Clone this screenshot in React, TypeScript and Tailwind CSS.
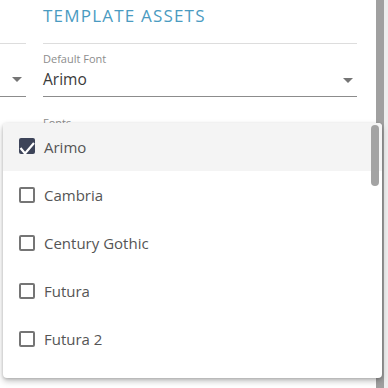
import { useState } from "react";

const fonts = ["Arimo", "Cambria", "Century Gothic", "Futura", "Futura 2"];

function Caret({ className }: { className?: string }) {
  return (
    <svg width="10" height="5" viewBox="0 0 10 5" className={className}>
      <path d="M0 0 L10 0 L5 5 Z" fill="#757575" />
    </svg>
  );
}

function Checkbox({ checked }: { checked: boolean }) {
  if (checked) {
    return (
      <svg width="16" height="18" viewBox="0 0 16 18" className="shrink-0">
        <rect x="0" y="0" width="16" height="16" rx="2" fill="#3d4459" />
        <path d="M1.5 10 L6 15.5 L15 5" fill="none" stroke="#ffffff" strokeWidth="2.2" />
      </svg>
    );
  }
  return <span className="w-4 h-4 shrink-0 rounded-[2px] border-2 border-[#757575]" />;
}

export default function App() {
  const [selected] = useState<string[]>(["Arimo"]);

  return (
    <div className="relative w-[388px] h-[388px] overflow-hidden bg-white flex" style={{ fontFamily: "'Open Sans', 'Noto Sans', sans-serif" }}>
      <div className="flex-1 flex gap-[17px]">
        {/* cut-off left column */}
        <div className="w-[26px] shrink-0 pt-[43px]">
          <div className="border-t border-[#dddddd]" />
          <div className="h-[53px] flex items-end justify-end pb-[14px] pr-[4px] border-b border-[#8c8c8c]">
            <Caret />
          </div>
        </div>

        {/* template assets column */}
        <div className="w-[314px] shrink-0">
          <h2 className="h-[43px] pt-[4px] text-[17px] leading-[24px] tracking-[1.2px] text-[#4a9bc1]">TEMPLATE ASSETS</h2>
          <div className="border-t border-[#dddddd]" />
          <div className="pt-[8px]">
            <div className="text-[11px] leading-[14px] text-[#8d8d8d]">Default Font</div>
            <div className="h-[31px] flex items-center justify-between border-b border-[#8c8c8c] pb-[2px]">
              <span className="text-[15.5px] text-[#3a3a3a]">Arimo</span>
              <Caret className="mr-[4px]" />
            </div>
          </div>
          <div className="pt-[19px] text-[11px] leading-[14px] text-[#8d8d8d]">Fonts</div>
        </div>
      </div>

      {/* page scrollbar */}
      <div className="w-[12px] shrink-0 flex">
        <div className="w-[8px] bg-[#a0a0a0]" />
        <div className="w-[4px] bg-[#eeeeee]" />
      </div>

      {/* dropdown menu */}
      <div className="absolute left-[3px] top-[123px] w-[379px] h-[255px] bg-white rounded-[4px] shadow-[0_3px_6px_rgba(0,0,0,0.25),0_1px_3px_rgba(0,0,0,0.15)] overflow-hidden">
        <ul>
          {fonts.map((f) => {
            const on = selected.includes(f);
            return (
              <li key={f} className={`h-[48px] flex items-center gap-[9px] pl-[16px] ${on ? "bg-[#f4f4f4]" : ""}`}>
                <Checkbox checked={on} />
                <span className="text-[15px] text-[#555555]">{f}</span>
              </li>
            );
          })}
        </ul>
        <div className="absolute right-[3px] top-[2px] w-[8px] h-[61px] rounded-full bg-[#a3a3a3]" />
      </div>
    </div>
  );
}
